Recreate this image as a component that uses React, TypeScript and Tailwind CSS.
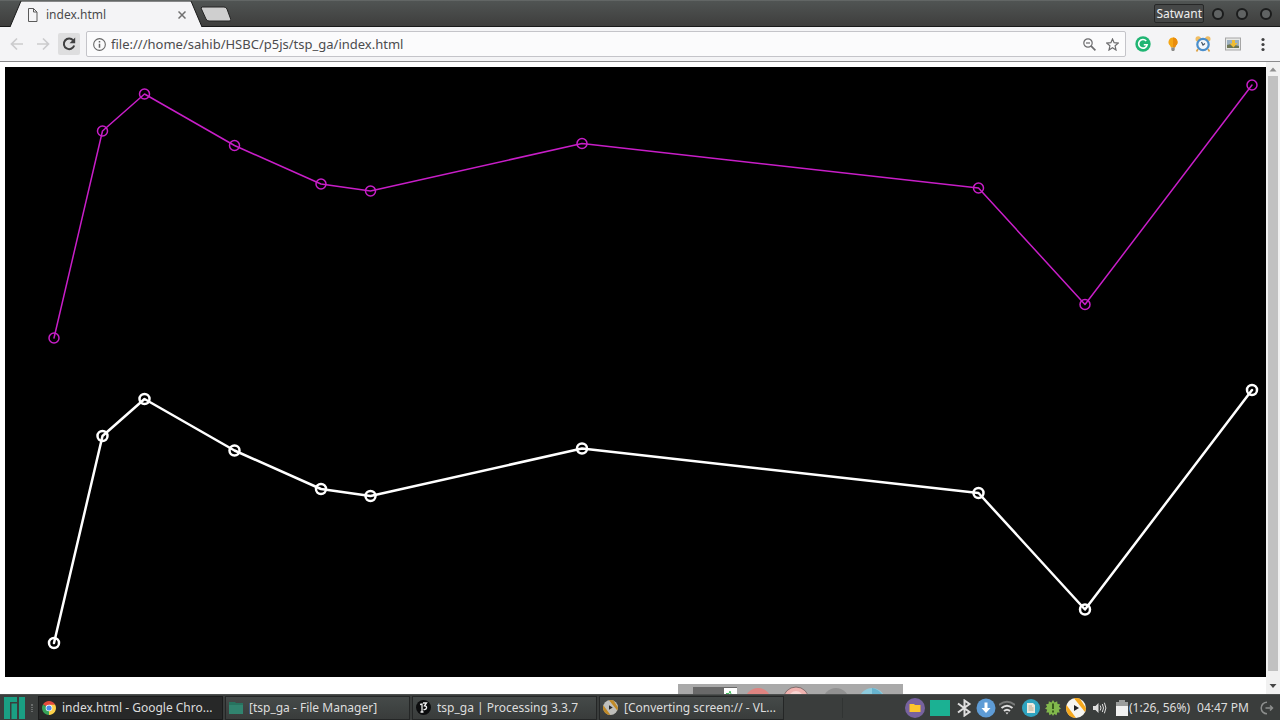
import React from "react";

type Point = [number, number];

const CITIES: Point[] = [
  [49, 271],
  [97.5, 64],
  [139.5, 27],
  [229.5, 78.5],
  [316, 117],
  [365.5, 124],
  [577, 76.5],
  [973.5, 121],
  [1080, 237.5],
  [1247, 18],
];

interface RouteProps {
  color: string;
  strokeWidth: number;
  offsetY: number;
}

const Route: React.FC<RouteProps> = ({ color, strokeWidth, offsetY }) => (
  <g
    transform={`translate(0 ${offsetY})`}
    fill="none"
    stroke={color}
    strokeWidth={strokeWidth}
    strokeLinejoin="round"
    strokeLinecap="round"
  >
    <polyline points={CITIES.map((p) => p.join(",")).join(" ")} />
    {CITIES.map(([x, y]) => (
      <circle key={x} cx={x} cy={y} r={5} />
    ))}
  </g>
);

const TitleBar = () => (
  <header className="flex h-[27px] shrink-0 items-stretch border-t border-b border-t-[#626665] border-b-[#191a1a] bg-linear-to-b from-[#505453] to-[#3e3e3d]">
    <div className="relative -mb-px ml-[10px] flex h-[27px] w-[193px] items-center pr-[17px] pl-[17px]">
      <svg
        className="absolute inset-0 h-full w-full"
        viewBox="0 0 193 27"
        preserveAspectRatio="none"
        aria-hidden="true"
      >
        <path d="M0 26 L11 0 H181 L192 26 V27 H0 Z" fill="#f4f4f6" />
        <path d="M0 26 L11 0 H181 L192 26" fill="none" stroke="#191a1a" />
      </svg>
      <svg
        className="relative h-[14px] w-[11px]"
        viewBox="0 0 11 14"
        fill="none"
        stroke="#5a5a5a"
        aria-hidden="true"
      >
        <path d="M1.5 .5 H6.5 L10 4 V13.5 H1.5 Z M6.5 .5 V4 H10" />
      </svg>
      <span className="relative ml-2 flex-1 text-[#4a4a4c]">index.html</span>
      <button type="button" aria-label="Close tab" className="relative">
        <svg className="h-2 w-2" viewBox="0 0 8 8" stroke="#707070" strokeWidth="1.5">
          <path d="M.5 .5 L7.5 7.5 M7.5 .5 L.5 7.5" />
        </svg>
      </button>
    </div>
    <button type="button" aria-label="New tab" className="-ml-2 flex items-center px-1">
      <svg className="h-4 w-8" viewBox="0 0 32 16">
        <path d="M3 1 H25 Q27 1 28 3 L32 14 Q32 15 30 15 H10 Q8 15 7 13 L2 2 Z" fill="#cfcfcf" stroke="#222" />
      </svg>
    </button>
    <div className="flex-1" />
    <button
      type="button"
      className="my-[3px] mr-2 flex items-center rounded-xs border border-[#262727] bg-[#454747] px-px text-[#eeeeee]"
    >
      Satwant
    </button>
    {["Minimize", "Maximize", "Close"].map((label) => (
      <button
        key={label}
        type="button"
        aria-label={label}
        className="mr-3 flex items-center last:mr-2"
      >
        <span className="h-3 w-3 rounded-full border-2 border-[#1b1c1c] bg-[#606363]" />
      </button>
    ))}
  </header>
);

const Toolbar = () => (
  <nav className="flex h-[35px] shrink-0 items-center border-b border-[#8a8a8c] bg-[#f4f4f6] pl-[10px]">
    <button type="button" aria-label="Back">
      <svg className="h-[14px] w-[14px]" viewBox="0 0 14 14" fill="none" stroke="#cbcbcd" strokeWidth="1.7">
        <path d="M13 7 H1.5 M7 1.5 L1.5 7 L7 12.5" />
      </svg>
    </button>
    <button type="button" aria-label="Forward" className="ml-3">
      <svg className="h-[14px] w-[14px]" viewBox="0 0 14 14" fill="none" stroke="#cbcbcd" strokeWidth="1.7">
        <path d="M1 7 H12.5 M7 1.5 L12.5 7 L7 12.5" />
      </svg>
    </button>
    <button
      type="button"
      aria-label="Reload"
      className="ml-2 flex h-[22px] w-[22px] items-center justify-center rounded-xs bg-[#dededf]"
    >
      <svg className="h-[14px] w-[14px]" viewBox="0 0 14 14">
        <path d="M11.2 3.4 A5.3 5.3 0 1 0 12.2 8.5" fill="none" stroke="#3f3f40" strokeWidth="2" />
        <path d="M13.2 .5 V6.2 H7.5 Z" fill="#3f3f40" />
      </svg>
    </button>
    <div className="ml-[6px] flex h-[26px] flex-1 items-center rounded-xs border border-[#c4c4c9] bg-[#fbfbfc] px-[6px]">
      <svg className="h-[13px] w-[13px]" viewBox="0 0 12 12" fill="none" stroke="#666" aria-hidden="true">
        <circle cx="6" cy="6" r="5.4" />
        <path d="M6 5.2 V9 M6 2.8 V4.2" strokeWidth="1.4" />
      </svg>
      <input
        type="text"
        aria-label="Address"
        defaultValue="file:///home/sahib/HSBC/p5js/tsp_ga/index.html"
        className="ml-[5px] min-w-0 flex-1 bg-transparent text-[13px] text-[#4c4c4e] outline-none"
      />
      <button type="button" aria-label="Zoom out">
        <svg className="h-[13px] w-[13px]" viewBox="0 0 13 13" fill="none" stroke="#6c6c6e" strokeWidth="1.2">
          <circle cx="5" cy="5" r="4.2" />
          <path d="M3 5 H7" />
          <path d="M8.2 8.2 L12.4 12.4" strokeWidth="1.7" />
        </svg>
      </button>
      <button type="button" aria-label="Bookmark this page" className="ml-[10px]">
        <svg className="h-[13px] w-[13px]" viewBox="0 0 13 13" fill="none" stroke="#6c6c6e" strokeWidth="1.2">
          <path d="M6.5 1 L8.1 4.7 L12.2 5.1 L9.1 7.8 L10 12 L6.5 9.7 L3 12 L3.9 7.8 L.8 5.1 L4.9 4.7 Z" />
        </svg>
      </button>
    </div>
    <div className="ml-[9px] flex items-center gap-[14px] pr-[9px]">
      <button type="button" aria-label="Grammar check">
        <svg className="h-4 w-4" viewBox="0 0 16 16">
          <circle cx="8" cy="8" r="7.7" fill="#20b573" />
          <path d="M11.2 5 A4.3 4.3 0 1 0 12.2 8.7 H8.8" fill="none" stroke="#fff" strokeWidth="1.6" />
        </svg>
      </button>
      <button type="button" aria-label="Tips">
        <svg className="h-4 w-4" viewBox="0 0 16 16">
          <path d="M8 1.5 A4.6 4.6 0 0 0 5 9.5 L6 11.5 H10 L11 9.5 A4.6 4.6 0 0 0 8 1.5" fill="#f5a614" />
          <path d="M8 1.5 A4.6 4.6 0 0 1 11 9.5 L10 11.5 H8 Z" fill="#ea8c0c" />
          <path d="M6.3 11.5 H9.7 V14 L9 15 H7 L6.3 14 Z" fill="#8b8b88" />
        </svg>
      </button>
      <button type="button" aria-label="Alarm">
        <svg className="h-4 w-4" viewBox="0 0 16 16">
          <path d="M3 13 L1.5 15.5 M13 13 L14.5 15.5" stroke="#dda245" strokeWidth="1.6" />
          <circle cx="3.2" cy="2.9" r="2.7" fill="#f0bd63" />
          <circle cx="12.8" cy="2.9" r="2.7" fill="#f0bd63" />
          <circle cx="8" cy="8.5" r="5.7" fill="#f3f7fb" stroke="#4a8ecb" strokeWidth="2.2" />
          <path d="M6.5 6 L8 9 L10 7.5" fill="none" stroke="#456" strokeWidth="1.2" />
        </svg>
      </button>
      <button type="button" aria-label="Save image">
        <svg className="h-4 w-4" viewBox="0 0 16 16">
          <rect x=".5" y="2" width="15" height="12" fill="#e8e9e6" stroke="#a6a6a6" />
          <rect x="2" y="4" width="12" height="8" fill="#9bb0c2" />
          <path d="M2 12 V9 L6 8 L14 10 V12 Z" fill="#6d7654" />
          <path d="M7 4 H10 V7 H12.5 L8.5 11.5 L4.5 7.5 H7 Z" fill="#f0bd32" />
        </svg>
      </button>
      <button type="button" aria-label="Menu">
        <svg className="h-4 w-4" viewBox="0 0 16 16" fill="#404042">
          <circle cx="8" cy="3.5" r="1.6" />
          <circle cx="8" cy="8.5" r="1.6" />
          <circle cx="8" cy="13.5" r="1.6" />
        </svg>
      </button>
    </div>
  </nav>
);

const Scrollbar = () => (
  <div className="flex w-[14px] shrink-0 flex-col items-center bg-[#f1f1f1]">
    <svg className="h-[14px] w-[14px] shrink-0" viewBox="0 0 14 14" aria-hidden="true">
      <path d="M3.5 9.5 L7 5.5 L10.5 9.5 Z" fill="#8f8f8f" />
    </svg>
    <div className="mb-[9px] w-[10px] flex-1 bg-[#c1c1c1]" />
    <svg className="h-[14px] w-[14px] shrink-0" viewBox="0 0 14 14" aria-hidden="true">
      <path d="M3.5 4 L7 8 L10.5 4 Z" fill="#464646" />
    </svg>
  </div>
);

const ChromeIcon = () => (
  <svg className="h-[14px] w-[14px] shrink-0" viewBox="0 0 14 14" aria-hidden="true">
    <path d="M7 7 L.94 3.5 A7 7 0 0 1 13.06 3.5 Z" fill="#e34b3d" />
    <path d="M7 7 L13.06 3.5 A7 7 0 0 1 7 14 Z" fill="#fbd04a" />
    <path d="M7 7 L7 14 A7 7 0 0 1 .94 3.5 Z" fill="#37a35a" />
    <path d="M7 3.8 H13.2 L9.8 8.6 Z" fill="#fbd04a" />
    <circle cx="7" cy="7" r="3.3" fill="#fff" />
    <circle cx="7" cy="7" r="2.6" fill="#4c8bea" />
  </svg>
);

const FolderIcon = () => (
  <svg className="h-[14px] w-[14px] shrink-0" viewBox="0 0 14 14" aria-hidden="true">
    <path d="M0 1 H6 L7 2 H14 V13 H0 Z" fill="#27735f" />
    <rect y="4" width="14" height="9" fill="#31846f" />
  </svg>
);

const ProcessingIcon = () => (
  <svg className="h-[15px] w-[15px] shrink-0" viewBox="0 0 15 15" aria-hidden="true">
    <circle cx="7.5" cy="7.5" r="7.5" fill="#0b0c0d" />
    <path
      d="M4 4.5 L6 4 V12 M4.5 12 H7.5 M7 3 H10.5 L8.5 5.8 Q11 6 10.5 8 Q10 10 7.5 9.5"
      fill="none"
      stroke="#eee"
      strokeWidth="1.3"
    />
  </svg>
);

const DiscIcon = ({ dimmed = false }: { dimmed?: boolean }) => (
  <svg
    className={dimmed ? "h-[15px] w-[15px] shrink-0 opacity-70" : "h-5 w-5 shrink-0"}
    viewBox="0 0 20 20"
    aria-hidden="true"
  >
    <circle cx="10" cy="10" r="10" fill="#f6f5f0" />
    <path d="M.5 7 A10 10 0 0 0 10 20 Z" fill="#f6a81c" />
    <path d="M8 .2 A10 10 0 0 1 14 .8 L20 10 A10 10 0 0 1 19 14 Z" fill="#f6a81c" />
    <path d="M8 7 L13 10 L8 13 Z" fill="#222" />
  </svg>
);

interface TaskProps {
  icon: React.ReactNode;
  title: string;
  active?: boolean;
}

const Task: React.FC<TaskProps> = ({ icon, title, active = false }) => (
  <button
    type="button"
    className={`flex h-6 w-[185px] min-w-0 items-center border px-[3px] text-left ${
      active
        ? "border-[#1a1b1b] bg-[#272828]"
        : "border-[#242626] bg-linear-to-b from-[#454a49] to-[#393c3b]"
    }`}
  >
    {icon}
    <span className="ml-[6px] truncate text-[#dddddd]">{title}</span>
  </button>
);

const TASKS: TaskProps[] = [
  { icon: <ChromeIcon />, title: "index.html - Google Chro...", active: true },
  { icon: <FolderIcon />, title: "[tsp_ga - File Manager]" },
  { icon: <ProcessingIcon />, title: "tsp_ga | Processing 3.3.7" },
  { icon: <DiscIcon dimmed />, title: "[Converting screen:// - VL..." },
];

const Tray = () => (
  <div className="flex shrink-0 items-center pr-[6px] text-[#dedede]">
    <svg className="h-5 w-5" viewBox="0 0 20 20" aria-hidden="true">
      <circle cx="10" cy="10" r="10" fill="#77629f" />
      <path d="M4.5 6 H9 L10 7 H15.5 V14 H4.5 Z" fill="#fbc52d" />
    </svg>
    <span className="ml-[5px] h-4 w-5 bg-[#1bb193]" />
    <svg
      className="ml-[6px] h-[18px] w-4"
      viewBox="0 0 16 18"
      fill="none"
      stroke="#dedede"
      strokeWidth="2"
      aria-hidden="true"
    >
      <path d="M2 4.5 L13.5 13 L8.5 16.5 V1.5 L13.5 5 L2 13.5" />
    </svg>
    <svg className="ml-1 h-5 w-5" viewBox="0 0 20 20" aria-hidden="true">
      <circle cx="10" cy="10" r="9.5" fill="#5e9cd6" />
      <path d="M8.5 4.5 H11.5 V10 H14.5 L10 15 L5.5 10 H8.5 Z" fill="#fff" />
    </svg>
    <svg className="ml-[3px] h-4 w-4" viewBox="0 0 16 16" fill="none" strokeWidth="2" aria-hidden="true">
      <path d="M0 5 Q8 -1.5 16 5" stroke="#777978" />
      <path d="M2.5 8 Q8 3.5 13.5 8" stroke="#dedede" />
      <path d="M5 11 Q8 8.5 11 11" stroke="#dedede" />
      <path d="M6.5 12.5 H9.5 L8 14.5 Z" fill="#dedede" stroke="none" />
    </svg>
    <svg className="ml-[7px] h-[18px] w-[18px]" viewBox="0 0 18 18" aria-hidden="true">
      <circle cx="9" cy="9" r="9" fill="#2fa3bf" />
      <path d="M5 4 H11 L13 6 V14 H5 Z" fill="#eee9dd" />
      <path d="M6.5 7 H10 M6.5 9 H11.5 M6.5 11 H11.5" stroke="#b5a88d" />
    </svg>
    <svg className="ml-[5px] h-4 w-4" viewBox="0 0 16 16" aria-hidden="true">
      <path
        d="M8 0 L9.6 2.4 L12.2 1.2 L12.4 3.8 L15.2 4.4 L13.9 6.8 L16 8.4 L13.8 9.8 L14.8 12.4 L12.2 12.6 L11.6 15.2 L9.2 13.9 L8 16 L6.8 13.9 L4.4 15.2 L3.8 12.6 L1.2 12.4 L2.2 9.8 L0 8.4 L2.1 6.8 L.8 4.4 L3.6 3.8 L3.8 1.2 L6.4 2.4 Z"
        fill="#82b84c"
      />
      <path d="M8 3.5 V9 M8 10.5 V12.5" stroke="#395b1e" strokeWidth="2" />
    </svg>
    <span className="ml-[5px]">
      <DiscIcon />
    </span>
    <svg className="ml-[7px] h-[14px] w-[14px]" viewBox="0 0 14 14" aria-hidden="true">
      <path d="M0 5 H2.5 L5.5 2 V12 L2.5 9 H0 Z" fill="#dedede" />
      <path d="M7.2 4.5 Q8.8 7 7.2 9.5 M9.3 3 Q11.7 7 9.3 11 M11.4 1.7 Q14.4 7 11.4 12.3" fill="none" stroke="#dedede" />
    </svg>
    <svg className="ml-[9px] h-4 w-3" viewBox="0 0 12 16" aria-hidden="true">
      <path d="M3 0 H9 V2 H12 V6 H0 V2 H3 Z" fill="#9b9d9c" />
      <path d="M0 6 H12 V16 H0 Z" fill="#f1f1f1" />
    </svg>
    <span className="ml-px">(1:26, 56%)</span>
    <time className="ml-[7px]">04:47 PM</time>
    <button type="button" aria-label="Log out" className="ml-[11px]">
      <svg className="h-[14px] w-[14px]" viewBox="0 0 14 14" fill="none" stroke="#8c8e8d" strokeWidth="1.5">
        <path d="M7 1.2 A5.8 5.8 0 0 0 7 12.8 M5.5 7 H12.5 M10 4.5 L12.5 7 L10 9.5" />
      </svg>
    </button>
  </div>
);

// Sliver of a desktop window that shows above the taskbar.
const BackgroundWindow = () => (
  <svg
    className="absolute bottom-0 left-[53%] h-[10px] w-[225px]"
    viewBox="0 0 225 10"
    aria-hidden="true"
  >
    <rect width="225" height="10" fill="#a9a9a9" />
    <rect x="15" y="3" width="44" height="7" fill="#696969" />
    <rect x="46" y="4" width="13" height="6" fill="#fff" />
    <path d="M48 9.5 H51 L52 7 L53 10" fill="none" stroke="#49bd62" />
    <circle cx="80" cy="17" r="13" fill="#df8582" />
    <circle cx="118" cy="16" r="13" fill="#f0b3b0" stroke="#806f6f" />
    <circle cx="118" cy="14" r="7" fill="#f7d5d2" />
    <circle cx="158" cy="17" r="13" fill="#919191" />
    <circle cx="194" cy="17" r="13" fill="#8ecbdd" />
    <path d="M194 4 V10 H204 Q200 5 194 4" fill="#67b3ce" />
  </svg>
);

const Taskbar = () => (
  <footer className="flex h-[26px] shrink-0 items-center border-t border-[#4d504f] bg-[#3a3d3c]">
    <button type="button" aria-label="Applications" className="ml-1">
      <svg className="h-[22px] w-[21px]" viewBox="0 0 21 22">
        <path d="M0 0 H13 V5 H6 V22 H0 Z M7.5 6.5 H13 V22 H7.5 Z M15 0 H21 V22 H15 Z" fill="#1a9f83" />
      </svg>
    </button>
    <span className="mr-[5px] ml-[6px] h-2 w-[2px] border-x border-dotted border-[#6a6d6c]" />
    <div className="flex min-w-0 gap-[2px]">
      {TASKS.map((task) => (
        <Task key={task.title} {...task} />
      ))}
    </div>
    <span className="ml-[58px] h-5 w-px bg-[#313433]" />
    <div className="flex-1" />
    <Tray />
  </footer>
);

export default function App() {
  return (
    <div className="flex h-screen flex-col overflow-hidden bg-white font-['Noto_Sans',sans-serif] text-[12px] leading-4">
      <TitleBar />
      <Toolbar />
      <main className="relative flex min-h-0 flex-1">
        <div className="min-w-0 flex-1 pt-[5px] pl-[5px]">
          <svg
            className="block h-auto w-full bg-black"
            viewBox="0 0 1261 610"
            role="img"
            aria-label="Shortest route between cities"
          >
            <Route color="#c81ec8" strokeWidth={1.5} offsetY={0} />
            <Route color="#ffffff" strokeWidth={2.5} offsetY={305} />
          </svg>
        </div>
        <Scrollbar />
        <BackgroundWindow />
      </main>
      <Taskbar />
    </div>
  );
}
